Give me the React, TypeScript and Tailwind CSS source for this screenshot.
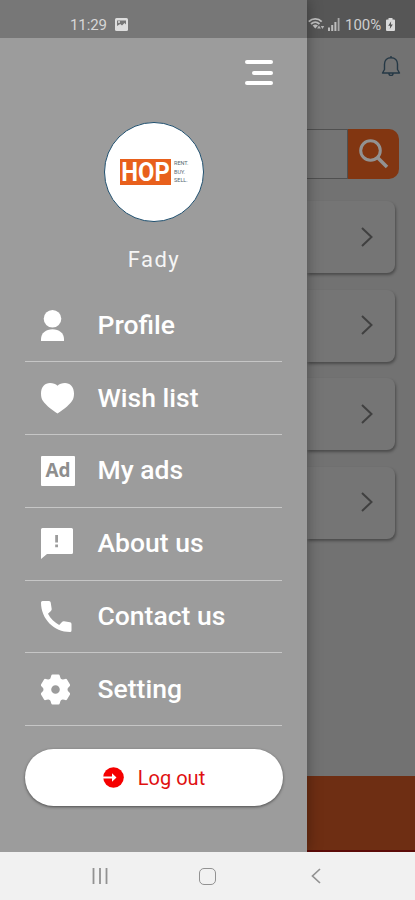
import type { ReactNode } from "react";

type MenuItem = {
  label: string;
  icon: ReactNode;
};

const menuItems: MenuItem[] = [
  {
    label: "Profile",
    icon: (
      <svg width="23" height="31" viewBox="0 0 23 31" fill="currentColor">
        <circle cx="11.5" cy="8.8" r="8.8" />
        <path d="M0 31v-2C0 23 5 19.200 11.500 19.200S23 23 23 29v2z" />
      </svg>
    ),
  },
  {
    label: "Wish list",
    icon: (
      <svg width="33" height="31" viewBox="0 0 33 31" fill="currentColor">
        <path d="M16.500 30.500C13 28.500 5 22.500 2 18 .6 16 0 14 0 10.500 0 4 4 0 9 0c3 0 5.800.9 7.500 2.800C18.200.9 21 0 24 0c5 0 9 4 9 10.500 0 3.500-.6 5.500-2 7.500-3 4.500-11 10.500-14.500 12.500z" />
      </svg>
    ),
  },
  {
    label: "My ads",
    icon: (
      <span className="flex h-[30.500px] w-[34px] items-center justify-center rounded-[1px] bg-white font-['Open_Sans',sans-serif] text-[19px] leading-none font-bold text-[#8e8e8e]">
        Ad
      </span>
    ),
  },
  {
    label: "About us",
    icon: (
      <svg width="32" height="31" viewBox="0 0 32 31" fill="currentColor">
        <path
          fillRule="evenodd"
          d="M1.500 0h29Q32 0 32 1.500v23Q32 26 30.500 26H6L0 31V1.500Q0 0 1.500 0zM14.200 7v7.500h2.800V7zM14.200 16.500v2.800h2.800v-2.800z"
        />
      </svg>
    ),
  },
  {
    label: "Contact us",
    icon: (
      <svg width="31" height="31" viewBox="0 0 31 31" fill="currentColor">
        <path d="M1.500 0H8q1.500 0 1.700 1.500l1 6.500q.1 1.200-.8 2L7 12.800C9.500 17.500 13.500 21.500 18.200 24l2.800-3q.8-.9 2-.7l6 1q1.500.3 1.500 1.700v6.500q0 1.500-1.500 1.500C13 31 0 18 0 1.500Q0 0 1.500 0z" />
      </svg>
    ),
  },
  {
    label: "Setting",
    icon: (
      <svg width="29" height="31" viewBox="0 0 29 31" fill="currentColor">
        <g transform="translate(14.500 15.500)">
          {[0, 60, 120, 180, 240, 300].map((angle) => (
            <path
              key={angle}
              d="M-3-15h6q1 0 1.300 1.200L6-8H-6l1.700-5.800Q-4-15-3-15z"
              transform={`rotate(${angle})`}
            />
          ))}
          <circle r="8.200" fill="none" stroke="currentColor" strokeWidth="7.800" />
        </g>
      </svg>
    ),
  },
];

function PictureIcon() {
  return (
    <svg width="13" height="13" viewBox="0 0 13 13">
      <rect width="13" height="13" rx="1.5" fill="#dedede" />
      <path d="M2 8V2.500h9v4L9.500 5 7 7.500 5.200 6z" fill="#777" />
      <circle cx="4" cy="4" r="1" fill="#dedede" />
    </svg>
  );
}

function WifiIcon() {
  return (
    <svg width="17" height="14" viewBox="0 0 17 14" fill="none">
      <path
        d="M.8 4.600C4.500 1 10 1 13.700 4.600M3 7c2.600-2.300 5.900-2.300 8.500 0"
        stroke="#c0c0c0"
        strokeWidth="1.900"
      />
      <path d="M4.600 8.600c1.700-1.400 3.700-1.400 5.400 0L7.300 11.500z" fill="#c0c0c0" />
      <path d="m11 8.500-1.900 3h3.800zM14.500 12l1.700-3h-3.400z" fill="#b5b5b5" />
    </svg>
  );
}

function SignalIcon() {
  return (
    <svg width="12" height="13" viewBox="0 0 12 13" fill="#bdbdbd">
      <rect y="9.500" width="2" height="3.500" />
      <rect x="3.200" y="7" width="2" height="6" />
      <rect x="6.400" y="4" width="2" height="9" />
      <rect x="9.700" width="1.800" height="13" opacity="0.800" />
    </svg>
  );
}

function BatteryIcon() {
  return (
    <svg width="9" height="13" viewBox="0 0 9 13">
      <path
        d="M2.500 0h4v1.500H8q1 0 1 1V12q0 1-1 1H1q-1 0-1-1V2.500q0-1 1-1h1.500z"
        fill="#dadada"
      />
      <path d="M5.200 3.200 2.200 7.800h2L3.800 11l3-4.600h-2z" fill="#505050" />
    </svg>
  );
}

function Drawer() {
  return (
    <aside className="z-10 flex w-[307px] shrink-0 flex-col bg-[#9c9c9c] shadow-[0_0_14px_rgba(0,0,0,0.35)]">
      <div className="flex h-[38px] items-end gap-[7px] bg-[#777777] pb-[7px] pl-[70px] text-[15px] leading-[11px] text-[#d6d6d6]">
        <span className="w-[38px] tracking-[-0.100px]">11:29</span>
        <PictureIcon />
      </div>

      <div className="mt-[22px] mr-[34px] flex flex-col items-end gap-[6.500px]">
        <span className="h-1 w-7 rounded-full bg-white" />
        <span className="h-1 w-[21px] rounded-full bg-white" />
        <span className="h-1 w-7 rounded-full bg-white" />
      </div>

      <div className="mt-[37px] ml-[104px] flex h-[100px] w-[100px] items-center rounded-full border-[1.500px] border-[#1f4f6e] bg-white pl-[15px]">
        <span className="flex h-[26px] w-[51px] shrink-0 items-center justify-center bg-[#e8601c] text-white">
          <span className="scale-x-[0.95] text-[25px] leading-none font-bold">
            HOP
          </span>
        </span>
        <span className="ml-[3px] flex flex-col text-[5.500px] leading-[8.500px] text-[#56676f]">
          <span>RENT.</span>
          <span>BUY.</span>
          <span>SELL.</span>
        </span>
      </div>

      <p className="mt-[22px] pl-px text-center text-[22px] leading-8 tracking-[1.500px] text-[#f5f5f5]">
        Fady
      </p>

      <nav className="mx-[25px] mt-[13.500px]">
        {menuItems.map((item) => (
          <a
            key={item.label}
            className="flex h-[72.800px] items-center border-b-[1.500px] border-[#c6c6c6] pl-4 text-white"
          >
            <span className="flex w-[56.500px] items-center">{item.icon}</span>
            <span className="pb-px text-[26.500px] leading-8 font-medium whitespace-nowrap">
              {item.label}
            </span>
          </a>
        ))}
      </nav>

      <button
        type="button"
        className="mt-[23px] mr-6 ml-[25px] flex h-[57px] items-center justify-center gap-[14px] rounded-full bg-white text-[20px] text-[#e01010] shadow-[0_1px_3px_rgba(0,0,0,0.5)]"
      >
        <svg width="21" height="21" viewBox="0 0 21 21">
          <circle cx="10.5" cy="10.5" r="10.300" fill="#f50000" />
          <path d="M0 9.500h9V6.300l4.500 4.200L9 14.700v-3.200H0z" fill="#fff" />
        </svg>
        Log out
      </button>
    </aside>
  );
}

function HomePage() {
  return (
    <main className="flex min-w-0 flex-1 flex-col bg-[#727272]">
      <div className="flex h-[38px] items-end bg-[#565656] pb-[7px] pl-[1px] text-[15px] leading-[11px] text-[#cecece]">
        <WifiIcon />
        <span className="ml-[3px]">
          <SignalIcon />
        </span>
        <span className="ml-[5px] w-[37px]">100%</span>
        <span className="ml-[4px]">
          <BatteryIcon />
        </span>
      </div>

      <svg
        className="mt-[17px] ml-[74px]"
        width="20"
        height="22"
        viewBox="0 0 20 22"
        fill="none"
        stroke="#253845"
        strokeWidth="1.400"
        strokeLinejoin="round"
      >
        <path d="M10 1v1.700M3.500 14.500V9C3.500 5.300 6 2.700 10 2.700S16.500 5.300 16.500 9v5.500L18.500 18h-17zM8 18.500c0 2.500 4 2.500 4 0" />
      </svg>

      <div className="mt-[52px] flex h-[50px] w-[92px] shrink-0 overflow-hidden rounded-r-[10px]">
        <div className="flex-1 border-y border-r border-[#505050] bg-[#747474]" />
        <button
          type="button"
          className="flex w-[51px] items-center justify-center bg-[#823611]"
        >
          <svg
            width="30"
            height="30"
            viewBox="0 0 30 30"
            fill="none"
            stroke="#929292"
          >
            <circle cx="11.500" cy="11.500" r="9.800" strokeWidth="3" />
            <path d="m18.500 18.500 9.500 9.500" strokeWidth="3.500" />
          </svg>
        </button>
      </div>

      <div className="mt-[22px] flex flex-col gap-[16.600px]">
        {[1, 2, 3, 4].map((card) => (
          <div
            key={card}
            className="flex h-[72px] w-[88px] items-center justify-end rounded-r-[8px] bg-[#757575] pr-[22px] pb-px shadow-[1px_2px_3px_rgba(0,0,0,0.35)]"
          >
            <svg
              width="12"
              height="20"
              viewBox="0 0 12 20"
              fill="none"
              stroke="#404040"
              strokeWidth="2"
            >
              <path d="m1 1 9.500 9L1 19" />
            </svg>
          </div>
        ))}
      </div>

      <div className="mt-auto h-[76px] border-b-2 border-[#5c0b08] bg-[#6e2e13]" />
    </main>
  );
}

export default function App() {
  return (
    <div className="flex h-[900px] w-[415px] flex-col overflow-hidden font-[Roboto,sans-serif]">
      <div className="flex h-[852px] shrink-0 overflow-hidden">
        <Drawer />
        <HomePage />
      </div>

      <footer className="z-20 flex h-12 items-center bg-[#f1f1f1] pl-[92px] text-[#929292]">
        <svg width="16" height="16" viewBox="0 0 16 16" stroke="currentColor">
          <path d="M1.500 0v16M8 0v16M14.500 0v16" strokeWidth="1.800" />
        </svg>
        <span className="ml-[91px] h-[17px] w-[17px] rounded-[5px] border-[1.500px] border-current" />
        <svg
          className="ml-[95px]"
          width="10"
          height="16"
          viewBox="0 0 10 16"
          fill="none"
          stroke="currentColor"
          strokeWidth="1.700"
        >
          <path d="M9 1 1.500 8 9 15" />
        </svg>
      </footer>
    </div>
  );
}
